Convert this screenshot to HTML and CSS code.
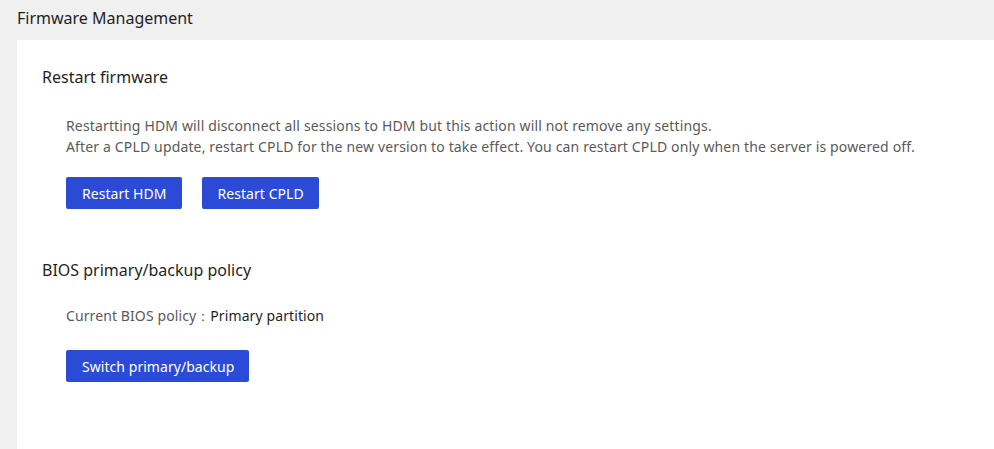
FILE: index.html
```html
<!DOCTYPE html>
<html>
<head>
<meta charset="utf-8">
<link rel="stylesheet" href="styles.css">
</head>
<body>
<div class="page">
  <div class="page-title">Firmware Management</div>
  <div class="panel">
    <section class="section">
      <h2 class="section-title">Restart firmware</h2>
      <div class="section-body">
        <p class="desc">Restartting HDM will disconnect all sessions to HDM but this action will not remove any settings.<br>After a CPLD update, restart CPLD for the new version to take effect. You can restart CPLD only when the server is powered off.</p>
        <div class="actions">
          <button class="btn">Restart HDM</button>
          <button class="btn">Restart CPLD</button>
        </div>
      </div>
    </section>
    <section class="section">
      <h2 class="section-title">BIOS primary/backup policy</h2>
      <div class="section-body">
        <div class="field"><span class="label">Current BIOS policy：</span><span class="value">Primary partition</span></div>
        <div class="actions actions-after-field">
          <button class="btn">Switch primary/backup</button>
        </div>
      </div>
    </section>
  </div>
</div>
</body>
</html>
```
FILE: styles.css
```css
html, body {
  margin: 0;
  padding: 0;
  background: #f0f0f0;
  height: 100%;
}
body {
  font-family: "Noto Sans", "Open Sans", sans-serif;
  color: #1f1f1f;
  overflow: hidden;
}
.page {
  padding-left: 17px;
  display: flex;
  flex-direction: column;
  height: 100%;
}
.page-title {
  font-size: 16px;
  line-height: 24px;
  padding-top: 6px;
  height: 40px;
  box-sizing: border-box;
  color: #1f1f1f;
}
.panel {
  flex: 1;
  background: #ffffff;
  padding: 24px 25px 0 25px;
}
.section + .section {
  margin-top: 48px;
}
.section-title {
  margin: 0;
  font-size: 16px;
  font-weight: normal;
  line-height: 26px;
  color: #1f1f1f;
}
.section-body {
  padding-left: 24px;
}
.desc {
  margin: 25px 0 0 0;
  font-size: 14px;
  line-height: 21px;
  letter-spacing: 0.15px;
  color: #5a5a5a;
}
.field {
  margin-top: 22px;
  font-size: 14px;
  line-height: 21px;
  letter-spacing: 0.1px;
}
.label {
  color: #5a5a5a;
}
.value {
  color: #1f1f1f;
}
.actions {
  display: flex;
  gap: 20px;
  margin-top: 20px;
}
.actions-after-field {
  margin-top: 24px;
}
.btn {
  font-family: inherit;
  font-size: 14px;
  letter-spacing: 0.05px;
  height: 32px;
  padding: 0 15px 0 16px;
  border: none;
  border-radius: 2px;
  background: #2b4bd6;
  color: #ffffff;
  cursor: pointer;
}
```
